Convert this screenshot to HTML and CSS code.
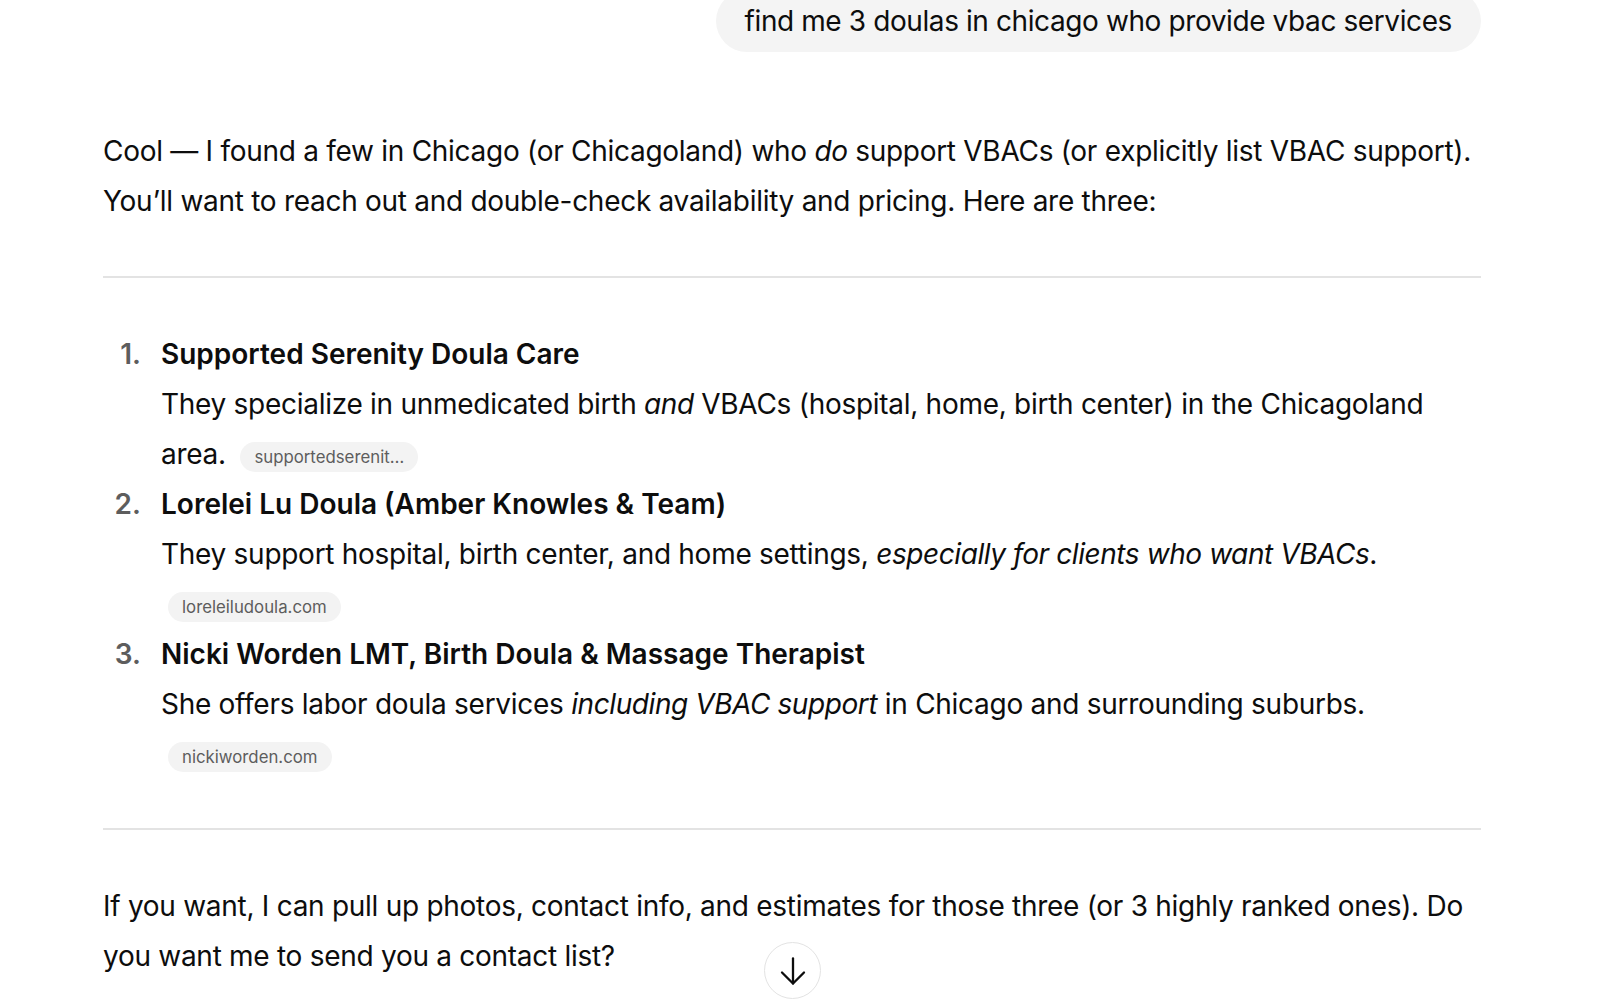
FILE: index.html
```html
<!DOCTYPE html>
<html lang="en">
<head>
<meta charset="utf-8">
<title>Chat</title>
<link rel="stylesheet" href="styles.css">
</head>
<body>
<main class="thread">
  <div class="user-row">
    <div class="user-bubble">find me 3 doulas in chicago who provide vbac services</div>
  </div>

  <div class="answer">
    <p>Cool — I found a few in Chicago (or Chicagoland) who <em>do</em> support VBACs (or explicitly list VBAC support). You’ll want to reach out and double-check availability and pricing. Here are three:</p>

    <hr class="rule-top">

    <ol class="doulas">
      <li>
        <div class="item">
          <strong>Supported Serenity Doula Care</strong><br>
          They specialize in unmedicated birth <em>and</em> VBACs (hospital, home, birth center) in the Chicagoland area. <span class="pill">supportedserenit…</span>
        </div>
      </li>
      <li>
        <div class="item">
          <strong>Lorelei Lu Doula (Amber Knowles &amp; Team)</strong><br>
          They support hospital, birth center, and home settings, <em>especially for clients who want VBACs</em>. <span class="pill">loreleiludoula.com</span>
        </div>
      </li>
      <li>
        <div class="item">
          <strong>Nicki Worden LMT, Birth Doula &amp; Massage Therapist</strong><br>
          She offers labor doula services <em>including VBAC support</em> in Chicago and surrounding suburbs. <span class="pill">nickiworden.com</span>
        </div>
      </li>
    </ol>

    <hr class="rule-bottom">

    <p>If you want, I can pull up photos, contact info, and estimates for those three (or 3 highly ranked ones). Do you want me to send you a contact list?</p>
  </div>

  <button class="scroll-down" aria-label="Scroll to bottom">
    <svg width="32" height="32" viewBox="0 0 32 32" fill="none" stroke="currentColor" stroke-width="2.3" stroke-linecap="round" stroke-linejoin="round"><path d="M16 3.5V28.5"/><path d="M5 17.5 16 28.5 27 17.5"/></svg>
  </button>
</main>
</body>
</html>
```

FILE: styles.css
```css
* { box-sizing: border-box; }

html, body {
  margin: 0;
  padding: 0;
  background: #ffffff;
  height: 100%;
  overflow: hidden;
}

body {
  font-family: Inter, "Noto Sans", "Liberation Sans", sans-serif;
  color: #0d0d0d;
  font-size: 28px;
  line-height: 50px;
  letter-spacing: -0.28px;
}

.thread {
  width: 1378px;
  margin-left: 103px;
}

.user-row {
  display: flex;
  justify-content: flex-end;
  margin-top: -10px;
}

.user-bubble {
  background: #f4f4f4;
  border-radius: 32px;
  padding: 18px 29px;
  line-height: 26px;
  letter-spacing: -0.4px;
}

.answer p {
  margin: 0;
}

.answer > p:first-child {
  margin-top: 74px;
}

hr {
  border: 0;
  height: 2px;
  background: #e3e3e3;
}

.rule-top {
  margin: 50px 0 51px;
}

.rule-bottom {
  margin: 49px 0 51px;
}

em {
  font-style: italic;
  letter-spacing: -0.42px;
}

strong {
  font-weight: 600;
  letter-spacing: 0;
}

.doulas {
  list-style: none;
  margin: 0 0 5px;
  padding: 0;
  counter-reset: item;
}

.doulas li {
  counter-increment: item;
  display: grid;
  grid-template-columns: 58px 1fr;
}

.doulas li::before {
  content: counter(item) ".";
  justify-self: end;
  padding-right: 20px;
  color: #5d5d5d;
  font-weight: 600;
  letter-spacing: 0;
}

.pill {
  display: inline-block;
  margin-left: 7px;
  padding: 0 14px;
  height: 30px;
  line-height: 30px;
  border-radius: 15px;
  background: #f3f3f3;
  color: #5d5d5d;
  font-size: 16.8px;
  letter-spacing: 0;
  vertical-align: 1px;
}

.scroll-down {
  position: absolute;
  left: 764px;
  top: 942px;
  width: 57px;
  height: 57px;
  border-radius: 50%;
  border: 1.5px solid #e3e3e3;
  background: #ffffff;
  color: #0d0d0d;
  display: flex;
  align-items: center;
  justify-content: center;
  padding: 0;
}
```
